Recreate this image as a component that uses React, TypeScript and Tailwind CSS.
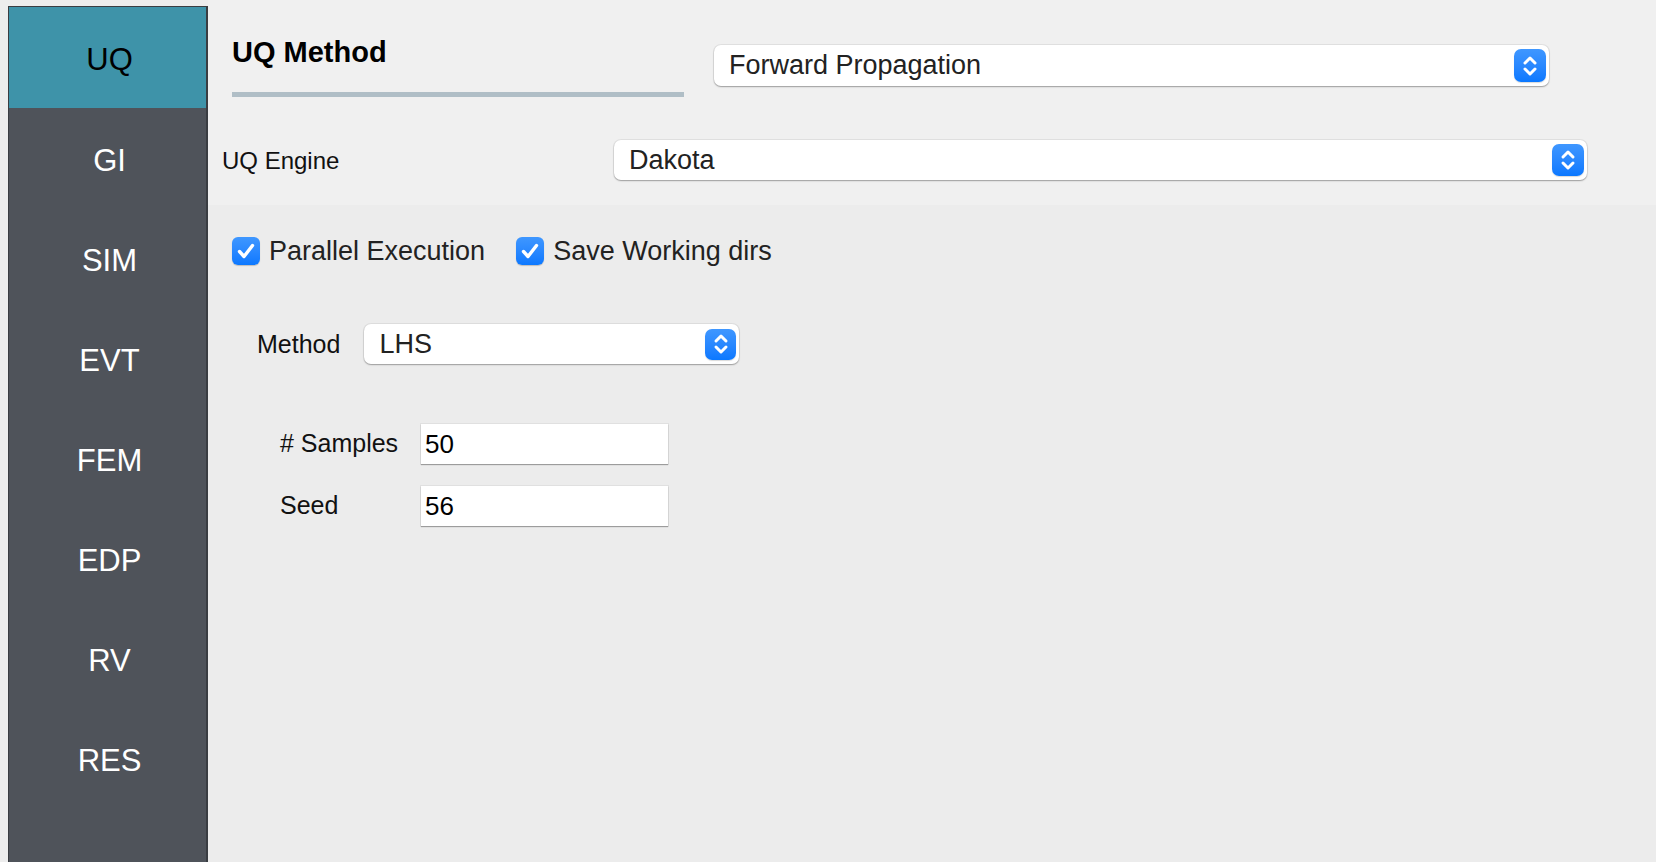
import React from "react";

function Stepper({ size = "w-[32px] h-[33px]" }: { size?: string }) {
  return (
    <div
      className={`${size} rounded-[7px] bg-gradient-to-b from-[#3f97ff] to-[#0a78ff] flex items-center justify-center shadow-[0_1px_1px_rgba(0,0,0,0.15)]`}
    >
      <svg width="16" height="24" viewBox="0 0 16 24" fill="none">
        <path d="M3 9 L8 4 L13 9" stroke="white" strokeWidth="3" strokeLinecap="round" strokeLinejoin="round" />
        <path d="M3 15 L8 20 L13 15" stroke="white" strokeWidth="3" strokeLinecap="round" strokeLinejoin="round" />
      </svg>
    </div>
  );
}

function Combo({
  value,
  className,
  stepper,
}: {
  value: string;
  className: string;
  stepper?: string;
}) {
  return (
    <div
      className={`${className} bg-white rounded-[7px] flex items-center justify-between pl-[15px] pr-[3px] shadow-[0_1px_1.5px_rgba(0,0,0,0.3),0_0_0_1px_rgba(0,0,0,0.06)]`}
    >
      <span className="text-[27px] text-[#222]">{value}</span>
      <Stepper size={stepper} />
    </div>
  );
}

function Check({ label }: { label: string }) {
  return (
    <div className="flex items-center gap-[9px]">
      <div className="w-[28px] h-[28px] rounded-[6px] bg-gradient-to-b from-[#3f97ff] to-[#0a78ff] flex items-center justify-center shadow-[0_1px_1px_rgba(0,0,0,0.2)]">
        <svg width="20" height="18" viewBox="0 0 20 18" fill="none">
          <path d="M3.5 9.5 L8 14.5 L16.5 3.5" stroke="white" strokeWidth="3.4" strokeLinecap="round" strokeLinejoin="round" />
        </svg>
      </div>
      <span className="text-[27px] text-[#222]">{label}</span>
    </div>
  );
}

function Field({ label, value, gapTop }: { label: string; value: string; gapTop: string }) {
  return (
    <div className={`flex items-center pl-[72px] ${gapTop}`}>
      <span className="w-[141px] text-[25px] text-[#111]">{label}</span>
      <div className="w-[247px] h-[40px] bg-white flex items-center pl-[4px] shadow-[0_1px_1px_rgba(0,0,0,0.3),0_0_0_1px_rgba(0,0,0,0.05)]">
        <span className="text-[26px] text-black">{value}</span>
      </div>
    </div>
  );
}

export default function App() {
  const tabs = ["UQ", "GI", "SIM", "EVT", "FEM", "EDP", "RV", "RES"];

  return (
    <div className="flex w-[1656px] h-[862px] bg-[#f0f0f0] overflow-hidden font-['Liberation_Sans',Arial,sans-serif]">
      {/* sidebar */}
      <div className="pl-2 pt-[6px] bg-[#ededed]">
        <div className="w-[200px] h-full bg-[#4f535a] border-t border-l border-r-2 border-[#3a3d42] flex flex-col">
          {tabs.map((t, i) => (
            <div
              key={t}
              className={
                i === 0
                  ? "h-[101px] flex items-center justify-center pt-[6px] pl-[4px] text-[31px] text-black bg-[#3e93a9]"
                  : "h-[100px] flex items-center justify-center pt-[6px] pl-[4px] text-[31px] text-white"
              }
            >
              {t}
            </div>
          ))}
        </div>
      </div>

      {/* main */}
      <div className="flex-1 flex flex-col">
        <div className="h-[205px] bg-[#f0f0f0]">
          <div className="flex pl-6 pt-[35px]">
            <div className="w-[452px]">
              <h2 className="text-[29px] leading-[34px] font-bold text-black">UQ Method</h2>
              <div className="mt-[23px] h-[5px] bg-[#b0bec6]" />
            </div>
            <Combo value="Forward Propagation" className="ml-[30px] mt-[10px] w-[835px] h-[41px]" />
          </div>

          <div className="flex items-center pl-[14px] mt-[43px]">
            <span className="w-[392px] text-[24px] text-[#111] pt-[1px]">UQ Engine</span>
            <Combo value="Dakota" className="w-[973px] h-[40px]" stepper="w-[32px] h-[32px]" />
          </div>
        </div>

        <div className="flex-1 bg-[#ececec] flex flex-col">
          <div className="flex items-center gap-[31px] pl-6 mt-[32px] h-[28px]">
            <Check label="Parallel Execution" />
            <Check label="Save Working dirs" />
          </div>

          <div className="flex items-center gap-6 pl-[49px] mt-[59px]">
            <span className="text-[25px] text-[#111] pt-[2px]">Method</span>
            <Combo value="LHS" className="w-[375px] h-[40px]" stepper="w-[31px] h-[31px]" />
          </div>

          <Field label="# Samples" value="50" gapTop="mt-[60px]" />
          <Field label="Seed" value="56" gapTop="mt-[22px]" />
        </div>
      </div>
    </div>
  );
}
